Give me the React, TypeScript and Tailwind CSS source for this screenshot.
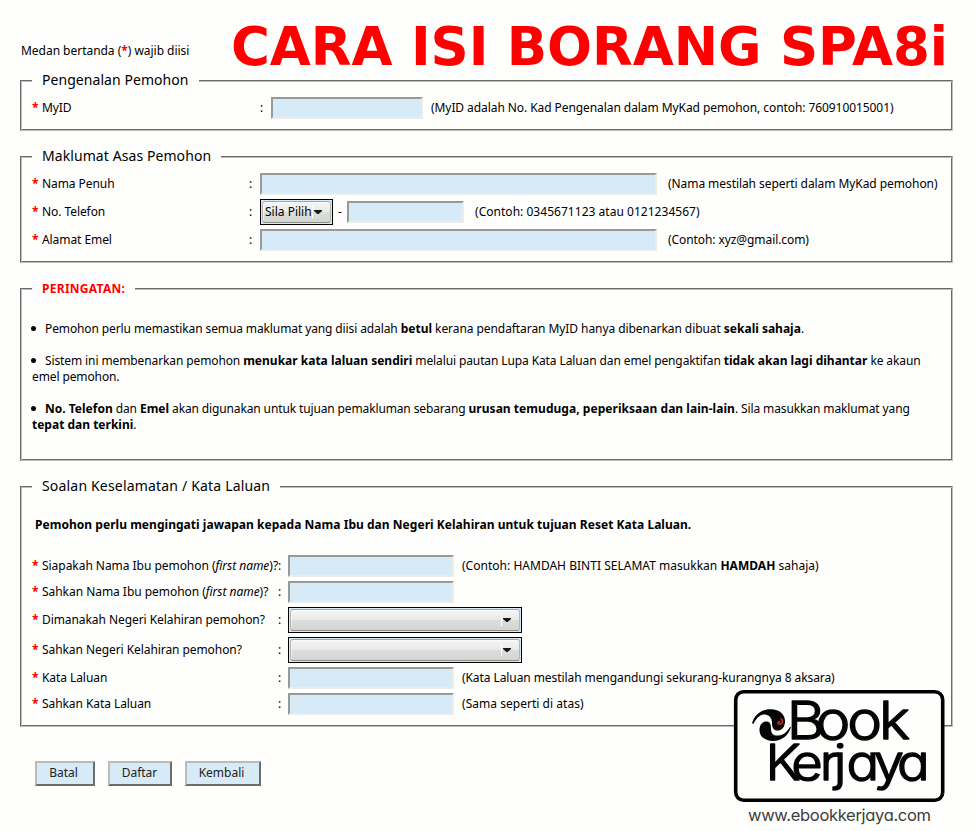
import React from "react";

type Kids = { children?: React.ReactNode };

function Section({ title, className, titleClass, children }: Kids & { title: string; className: string; titleClass: string }) {
  return (
    <section
      className={`ml-5 w-[933px] border border-t-[#6b6b6b] border-l-[#6b6b6b] border-r-[#bdbdbd] border-b-[#bdbdbd] shadow-[inset_1px_1px_0_#bdbdbd,inset_-1px_-1px_0_#6b6b6b] ${className}`}
    >
      <h2 className={`-mt-[11px] ml-[11px] h-5 w-fit bg-[#fefefd] px-2.5 whitespace-nowrap ${titleClass}`}>{title}</h2>
      {children}
    </section>
  );
}

function Row({ label, labelWidth, className, children }: Kids & { label: React.ReactNode; labelWidth: string; className: string }) {
  return (
    <div className={`flex items-center pl-[11px] whitespace-nowrap ${className}`}>
      <div className={`flex shrink-0 ${labelWidth}`}>
        <span className="w-[10px] shrink-0 font-bold text-[#ff0000]">*</span>
        <span className="tracking-[-0.07px]">{label}</span>
      </div>
      <span className="w-[10px] shrink-0">:</span>
      {children}
    </div>
  );
}

function Field({ className }: { className: string }) {
  return (
    <input
      className={`h-[22px] shrink-0 border-2 border-t-[#989a97] border-l-[#989a97] border-r-[#ebedeb] border-b-[#ebedeb] bg-[#d7eaf8] outline-none ${className}`}
    />
  );
}

function Select({ className, children }: Kids & { className: string }) {
  return (
    <button className={`h-[26px] shrink-0 border border-black bg-[#d7eaf8] p-px text-left ${className}`}>
      <span className="flex h-[22px] items-center rounded-[3px] border border-t-[#a3a5a2] border-x-[#b5b7b4] border-b-[#8b8d8a] bg-[linear-gradient(#f4f5f4,#e8eae8_50%,#dcdedb_51%,#d3d5d1)] shadow-[inset_1px_1px_0_#ffffff80]">
        {children}
      </span>
    </button>
  );
}

function Caret() {
  return (
    <svg width="11" height="12" viewBox="0 0 11 12" className="shrink-0">
      <path d="M.5 0v12" stroke="#fff" />
      <path d="M2 4h8v1L6.6 8H5.4L2 5z" fill="#181818" />
    </svg>
  );
}

function Action({ className, children }: Kids & { className: string }) {
  return (
    <button
      className={`h-[25px] border-2 border-t-[#babcba] border-l-[#babcba] border-r-[#6b6d6b] border-b-[#6b6d6b] bg-[#d7eaf8] pb-0.5 text-[12px] leading-[19px] text-[#222] ${className}`}
    >
      {children}
    </button>
  );
}

function Dot() {
  return <span className="mr-[9px] -ml-px inline-block size-[5px] rounded-full bg-black align-[2px]" />;
}

function Bold({ children, className = "tracking-normal" }: Kids & { className?: string }) {
  return <b className={className}>{children}</b>;
}

function Logo() {
  return (
    <svg className="absolute top-[688px] left-[732px]" width="216" height="142" viewBox="732 688 216 142">
      <rect x="735.7" y="691.7" width="207" height="108.6" rx="8" fill="#fefefd" stroke="#000" strokeWidth="3.6" />
      <path
        d="M752 723.5C754.500 714 762 709 771 709.300C780 709.500 785.500 715 785 722C784.500 728 781 731 777 730.500C773 730 772 727 772 723C772 718 769 714.500 764.500 714.500C760 714.500 756 718.500 753.500 723.800Z"
        fill="#050505"
      />
      <path
        d="M791 727C788.500 736 781 741.500 772 741C763.500 740.500 759 735.500 759.500 729C760 723.500 763.500 721 767 721.500C770.500 722 771 725 771 729C771 734 774 736 778.500 735.500C783.500 735 787 732 790 727Z"
        fill="#050505"
      />
      <path d="M780.500 718.500l2 2c0 2.500-2 4-3.500 3.500c-2-.5-1-3 1-2" fill="none" stroke="#e02a1d" strokeWidth="1.4" />
      <g
        className="font-['Inter',sans-serif] [font-feature-settings:'cv11'] font-light"
        fill="#050505"
        stroke="#050505"
        strokeWidth="1.4"
        strokeLinejoin="round"
      >
        <text transform="translate(786.800 739.300) scale(1.13 1)" x="0 25.500 53.500 81.500" y="0" fontSize="52">
          Book
        </text>
        <text transform="translate(765.600 780.300) scale(1.11 1)" x="0 23.200 48.800 61.500 72.800 97.500 118.500" y="0" fontSize="49">
          Kerjaya
        </text>
      </g>
      <text
        x="748"
        y="821"
        textLength="183"
        fontSize="16.5"
        fill="#3d3d3d"
        className="font-['Inter',sans-serif] [font-feature-settings:'cv11']"
      >
        www.ebookkerjaya.com
      </text>
    </svg>
  );
}

export default function App() {
  return (
    <main className="relative h-[831px] w-[975px] overflow-hidden bg-[#fefefd] font-['Noto_Sans',sans-serif] text-[12px] leading-4 text-black">
      <header className="flex h-20">
        <p className="mt-[43px] ml-[21px] w-[210px] tracking-[-0.03px] whitespace-nowrap">
          Medan bertanda (<b className="text-[#ff0000]">*</b>) wajib diisi
        </p>
        <h1 className="mt-[15px] font-['DejaVu_Sans',sans-serif] text-[53px] leading-[64px] font-bold tracking-[-0.06px] whitespace-nowrap text-[#ff0000]">
          CARA ISI BORANG SPA8i
        </h1>
      </header>

      <Section title="Pengenalan Pemohon" titleClass="text-[14px] leading-5 tracking-[0.06px]" className="h-[51px]">
        <Row label="MyID" labelWidth="w-[228px]" className="mt-[7px] h-[22px]">
          <Field className="ml-px w-[152px]" />
          <span className="ml-2 tracking-[-0.075px]">(MyID adalah No. Kad Pengenalan dalam MyKad pemohon, contoh: 760910015001)</span>
        </Row>
      </Section>

      <Section title="Maklumat Asas Pemohon" titleClass="text-[14px] leading-5 tracking-[0.08px]" className="mt-[25px] h-[107px]">
        <Row label="Nama Penuh" labelWidth="w-[217px]" className="mt-1 h-7">
          <Field className="ml-px w-[397px]" />
          <span className="ml-[11px] tracking-[-0.07px]">(Nama mestilah seperti dalam MyKad pemohon)</span>
        </Row>
        <Row label="No. Telefon" labelWidth="w-[217px]" className="h-7">
          <Select className="ml-px w-[73px]">
            <span className="ml-[2px] w-[47px]">Sila Pilih</span>
            <Caret />
          </Select>
          <span className="ml-[5px] w-[9px]">-</span>
          <Field className="w-[117px]" />
          <span className="ml-[11px] tracking-[0.03px]">(Contoh: 0345671123 atau 0121234567)</span>
        </Row>
        <Row label="Alamat Emel" labelWidth="w-[217px]" className="h-7">
          <Field className="ml-px w-[397px]" />
          <span className="ml-[11px] tracking-[-0.08px]">(Contoh: xyz@gmail.com)</span>
        </Row>
      </Section>

      <Section
        title="PERINGATAN:"
        titleClass="text-[12px] leading-[22px] tracking-[0.28px] font-bold text-[#ff0000]"
        className="mt-[25px] h-[173px]"
      >
        <div className="mt-[23px] flex flex-col gap-4 pl-[11px] tracking-[-0.11px] whitespace-nowrap">
          <p>
            <Dot />
            Pemohon perlu memastikan semua maklumat yang diisi adalah <Bold>betul</Bold>
            <span className="tracking-[-0.07px]"> kerana pendaftaran MyID hanya dibenarkan dibuat </span>
            <Bold>sekali sahaja</Bold>.
          </p>
          <p>
            <Dot />
            Sistem ini membenarkan pemohon <Bold>menukar kata laluan sendiri</Bold> melalui pautan Lupa Kata Laluan dan emel pengaktifan{" "}
            <Bold>tidak akan lagi dihantar</Bold> ke akaun
            <br />
            emel pemohon.
          </p>
          <p>
            <Dot />
            <Bold>No. Telefon</Bold> dan <Bold>Emel</Bold>
            <span className="tracking-[-0.13px]"> akan digunakan untuk tujuan pemakluman sebarang </span>
            <Bold className="tracking-[0.04px]">urusan temuduga, peperiksaan dan lain-lain</Bold>. Sila masukkan maklumat yang
            <br />
            <Bold>tepat dan terkini</Bold>.
          </p>
        </div>
      </Section>

      <Section
        title="Soalan Keselamatan / Kata Laluan"
        titleClass="text-[14px] leading-5 tracking-[0.18px]"
        className="mt-[25px] h-[241px]"
      >
        <p className="mt-[21px] ml-[14px] font-bold tracking-[0.035px]">
          Pemohon perlu mengingati jawapan kepada Nama Ibu dan Negeri Kelahiran untuk tujuan Reset Kata Laluan.
        </p>
        <div className="mt-[22px] flex flex-col gap-1">
          <Row
            label={<span className="tracking-[-0.04px]">Siapakah Nama Ibu pemohon (<i>first name</i>)?</span>}
            labelWidth="w-[246px]"
            className="h-[22px]"
          >
            <Field className="w-[166px]" />
            <span className="ml-2 tracking-[0.02px]">(Contoh: HAMDAH BINTI SELAMAT masukkan <b>HAMDAH</b> sahaja)</span>
          </Row>
          <Row
            label={<span className="tracking-[-0.04px]">Sahkan Nama Ibu pemohon (<i>first name</i>)?</span>}
            labelWidth="w-[246px]"
            className="h-[22px]"
          >
            <Field className="w-[166px]" />
          </Row>
          <Row label="Dimanakah Negeri Kelahiran pemohon?" labelWidth="w-[246px]" className="h-[26px]">
            <Select className="w-[234px]">
              <span className="w-[210px]" />
              <Caret />
            </Select>
          </Row>
          <Row label="Sahkan Negeri Kelahiran pemohon?" labelWidth="w-[246px]" className="h-[26px]">
            <Select className="w-[234px]">
              <span className="w-[210px]" />
              <Caret />
            </Select>
          </Row>
          <Row label="Kata Laluan" labelWidth="w-[246px]" className="h-[22px]">
            <Field className="w-[166px]" />
            <span className="ml-2 tracking-[-0.08px]">(Kata Laluan mestilah mengandungi sekurang-kurangnya 8 aksara)</span>
          </Row>
          <Row label="Sahkan Kata Laluan" labelWidth="w-[246px]" className="h-[22px]">
            <Field className="w-[166px]" />
            <span className="ml-2 tracking-[0.03px]">(Sama seperti di atas)</span>
          </Row>
        </div>
      </Section>

      <div className="mt-[34px] ml-[35px] flex gap-[13px]">
        <Action className="w-[60px] pr-[3px]">Batal</Action>
        <Action className="w-[64px] pr-px">Daftar</Action>
        <Action className="w-[76px] pr-[3px]">Kembali</Action>
      </div>
      <Logo />
    </main>
  );
}
